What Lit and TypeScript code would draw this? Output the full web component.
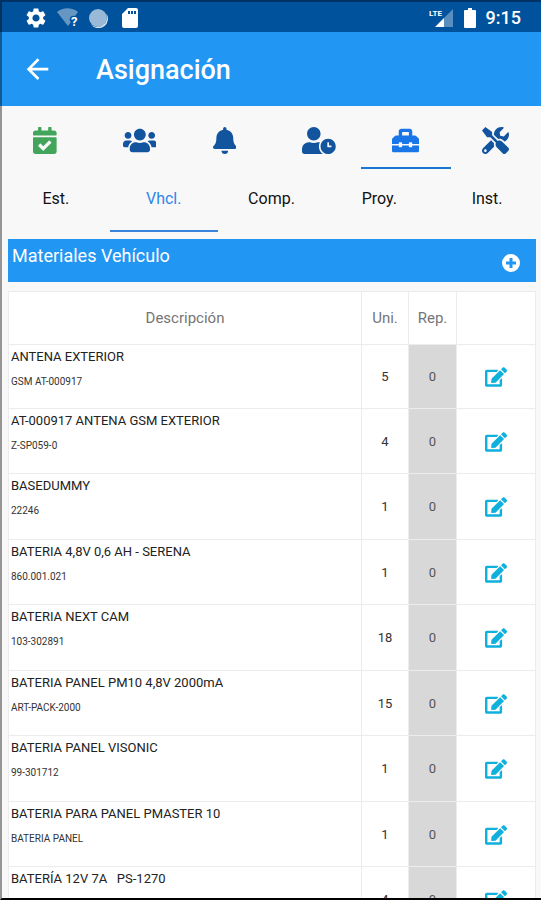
import { LitElement, html, css, svg } from "lit";
import { customElement, state } from "lit/decorators.js";

interface Material {
  name: string;
  code?: string;
  units: number;
  replaced: number;
}

interface Section {
  label: string;
  width: number;
  tone?: string;
  path: string;
}

const SECTIONS: Section[] = [
  {
    label: "Estado",
    width: 448,
    tone: "green",
    path: "M436 160H12c-6.627 0-12-5.373-12-12v-36c0-26.51 21.49-48 48-48h48V12c0-6.627 5.373-12 12-12h40c6.627 0 12 5.373 12 12v52h128V12c0-6.627 5.373-12 12-12h40c6.627 0 12 5.373 12 12v52h48c26.51 0 48 21.49 48 48v36c0 6.627-5.373 12-12 12zM12 192h424c6.627 0 12 5.373 12 12v260c0 26.51-21.49 48-48 48H48c-26.51 0-48-21.49-48-48V204c0-6.627 5.373-12 12-12zm333.296 95.947l-28.169-28.398c-4.667-4.705-12.265-4.736-16.97-.068L194.12 364.665l-45.98-46.352c-4.667-4.705-12.266-4.736-16.971-.068l-28.397 28.17c-4.705 4.667-4.736 12.265-.068 16.97l82.601 83.269c4.667 4.705 12.265 4.736 16.97.068l142.953-141.805c4.705-4.667 4.736-12.265.068-16.97z",
  },
  {
    label: "Equipo",
    width: 640,
    path: "M96 224c35.3 0 64-28.7 64-64s-28.7-64-64-64-64 28.7-64 64 28.7 64 64 64zm448 0c35.3 0 64-28.7 64-64s-28.7-64-64-64-64 28.7-64 64 28.7 64 64 64zm32 32h-64c-17.6 0-33.5 7.1-45.1 18.6 40.3 22.1 68.9 62 75.1 109.4h66c17.7 0 32-14.3 32-32v-32c0-35.3-28.7-64-64-64zm-256 0c61.9 0 112-50.1 112-112S381.9 32 320 32 208 82.1 208 144s50.1 112 112 112zm76.8 32h-8.3c-20.8 10-43.9 16-68.5 16s-47.6-6-68.5-16h-8.3C179.6 288 128 339.6 128 403.2V432c0 26.5 21.5 48 48 48h288c26.5 0 48-21.5 48-48v-28.8c0-63.6-51.6-115.2-115.2-115.2zm-223.7-13.4C161.5 263.1 145.6 256 128 256H64c-35.3 0-64 28.7-64 64v32c0 17.7 14.3 32 32 32h65.9c6.3-47.4 34.9-87.3 75.2-109.4z",
  },
  {
    label: "Avisos",
    width: 448,
    path: "M224 512c35.32 0 63.97-28.65 63.97-64H160.03c0 35.35 28.65 64 63.97 64zm215.39-149.71c-19.32-20.76-55.47-51.99-55.47-154.29 0-77.7-54.48-139.9-127.94-155.16V32c0-17.67-14.32-32-31.98-32s-31.98 14.33-31.98 32v20.84C118.56 68.1 64.08 130.3 64.08 208c0 102.3-36.15 133.53-55.47 154.29-6 6.45-8.66 14.16-8.61 21.71.11 16.4 12.98 32 32.1 32h383.8c19.12 0 32-15.6 32.1-32 .05-7.55-2.61-15.27-8.61-21.71z",
  },
  {
    label: "Horario",
    width: 640,
    path: "M496 224c-79.6 0-144 64.4-144 144s64.4 144 144 144 144-64.4 144-144-64.4-144-144-144zm64 150.3c0 5.3-4.4 9.7-9.7 9.7h-60.6c-5.3 0-9.7-4.4-9.7-9.7v-76.6c0-5.3 4.4-9.7 9.7-9.7h12.6c5.3 0 9.7 4.4 9.7 9.7V352h38.3c5.3 0 9.7 4.4 9.7 9.7v12.6zM320 368c0-27.8 6.7-54.1 18.2-77.5-8-1.5-16.2-2.5-24.6-2.5h-16.7c-22.2 10.2-46.9 16-72.9 16s-50.6-5.8-72.9-16h-16.7C60.2 288 0 348.2 0 422.4V464c0 26.5 21.5 48 48 48h347.1c-45.3-31.9-75.1-84.5-75.1-144zm-96-112c70.7 0 128-57.3 128-128S294.7 0 224 0 96 57.3 96 128s57.3 128 128 128z",
  },
  {
    label: "Materiales",
    width: 512,
    path: "M502.63 214.63l-45.25-45.25c-6-6-14.14-9.37-22.63-9.37H384V80c0-26.51-21.49-48-48-48H176c-26.51 0-48 21.49-48 48v80H77.25c-8.49 0-16.62 3.37-22.63 9.37L9.37 214.63c-6 6-9.37 14.14-9.37 22.63V320h128v-16c0-8.84 7.16-16 16-16h32c8.84 0 16 7.16 16 16v16h128v-16c0-8.84 7.16-16 16-16h32c8.84 0 16 7.16 16 16v16h128v-82.75c0-8.48-3.37-16.62-9.37-22.62zM320 160H192V96h128v64zm64 208c0 8.84-7.16 16-16 16h-32c-8.84 0-16-7.16-16-16v-16H192v16c0 8.84-7.16 16-16 16h-32c-8.84 0-16-7.16-16-16v-16H0v96c0 17.67 14.33 32 32 32h448c17.67 0 32-14.33 32-32v-96H384v16z",
  },
  {
    label: "Herramientas",
    width: 512,
    path: "M501.1 395.7L384 278.6c-23.1-23.1-57.6-27.6-85.4-13.9L192 158.1V96L64 0 0 64l96 128h62.1l106.6 106.6c-13.6 27.8-9.2 62.3 13.9 85.4l117.1 117.1c14.6 14.6 38.2 14.6 52.7 0l52.7-52.7c14.5-14.6 14.5-38.2 0-52.7zM331.7 225c28.3 0 54.9 11 74.9 31l19.4 19.4c15.8-6.9 30.8-16.5 43.8-29.5 37.1-37.1 49.7-89.3 37.9-136.7-2.2-9-13.5-12.1-20.1-5.5l-74.4 74.4-67.9-11.3L334 98.9l74.4-74.4c6.6-6.6 3.4-17.9-5.7-20.2-47.4-11.7-99.6.9-136.6 37.9-28.5 28.5-41.9 66.1-41.2 103.6l82.1 82.1c8.1-1.9 16.5-2.9 24.7-2.9zm-103.9 82l-56.7-56.7L18.7 402.8c-25 25-25 65.5 0 90.5s65.5 25 90.5 0l123.6-123.6c-7.6-19.9-9.9-41.6-5-62.7zM64 472c-13.2 0-24-10.8-24-24 0-13.3 10.7-24 24-24s24 10.7 24 24c0 13.2-10.7 24-24 24z",
  },
];

const TABS = ["Est.", "Vhcl.", "Comp.", "Proy.", "Inst."];

const MATERIALS: Material[] = [
  { name: "ANTENA EXTERIOR", code: "GSM AT-000917", units: 5, replaced: 0 },
  { name: "AT-000917 ANTENA GSM EXTERIOR", code: "Z-SP059-0", units: 4, replaced: 0 },
  { name: "BASEDUMMY", code: "22246", units: 1, replaced: 0 },
  { name: "BATERIA 4,8V 0,6 AH - SERENA", code: "860.001.021", units: 1, replaced: 0 },
  { name: "BATERIA NEXT CAM", code: "103-302891", units: 18, replaced: 0 },
  { name: "BATERIA PANEL PM10 4,8V 2000mA", code: "ART-PACK-2000", units: 15, replaced: 0 },
  { name: "BATERIA PANEL VISONIC", code: "99-301712", units: 1, replaced: 0 },
  { name: "BATERIA PARA PANEL PMASTER 10", code: "BATERIA PANEL", units: 1, replaced: 0 },
  { name: "BATERÍA 12V 7A \u00a0 PS-1270", units: 4, replaced: 0 },
];

const EDIT_PATH = svg`<path d="M402.6 83.2l90.2 90.2c3.8 3.8 3.8 10 0 13.8L274.4 405.6l-92.8 10.3c-12.4 1.4-22.9-9.1-21.5-21.5l10.3-92.8L388.8 83.2c3.8-3.8 10-3.8 13.8 0zm162-22.9l-48.8-48.8c-15.2-15.2-39.9-15.2-55.2 0l-35.4 35.4c-3.8 3.8-3.8 10 0 13.8l90.2 90.2c3.8 3.8 10 3.8 13.8 0l35.4-35.4c15.2-15.3 15.2-40 0-55.2zM384 346.2V448H64V128h229.8c3.2 0 6.2-1.3 8.5-3.5l40-40c7.6-7.6 2.2-20.5-8.5-20.5H48C21.5 64 0 85.500 0 112v352c0 26.5 21.5 48 48 48h352c26.5 0 48-21.5 48-48V306.2c0-10.7-12.9-16-20.5-8.5l-40 40c-2.2 2.3-3.5 5.3-3.5 8.5z"/>`;

@customElement("status-bar")
export class StatusBar extends LitElement {
  static styles = css`
    :host {
      display: flex;
      align-items: center;
      justify-content: space-between;
      height: 32px;
      padding: 3px 20px 0 25px;
      box-sizing: border-box;
      background: #00529c;
      color: #fff;
      font: 500 18px/24px Roboto, sans-serif;
    }
    .group {
      display: flex;
      align-items: center;
      gap: 10px;
    }
    svg {
      display: block;
      fill: #fff;
    }
    .lte {
      font: 700 8px Roboto, sans-serif;
    }
    .question {
      font: 700 13px Roboto, sans-serif;
    }
  `;

  render() {
    return html`
      <div class="group">
        <svg width="22" height="22" viewBox="1 1 22 22" aria-hidden="true">
          <path d="M19.14 12.94c.04-.3.06-.61.06-.94 0-.32-.02-.64-.07-.94l2.03-1.58c.18-.14.23-.41.12-.61l-1.92-3.32c-.12-.22-.37-.29-.59-.22l-2.39.96c-.5-.38-1.03-.7-1.62-.94l-.36-2.54c-.04-.24-.24-.41-.48-.41h-3.84c-.24 0-.43.17-.47.41l-.36 2.54c-.59.24-1.13.57-1.62.94l-2.39-.96c-.22-.08-.47 0-.59.22L2.74 8.87c-.12.21-.08.47.12.61l2.03 1.58c-.05.3-.09.63-.09.94s.02.64.07.94l-2.03 1.58c-.18.14-.23.41-.12.61l1.92 3.32c.12.22.37.29.59.22l2.39-.96c.5.38 1.03.7 1.62.94l.36 2.54c.05.24.24.41.48.41h3.84c.24 0 .44-.17.47-.41l.36-2.54c.59-.24 1.13-.56 1.62-.94l2.39.96c.22.08.47 0 .59-.22l1.92-3.32c.12-.22.07-.47-.12-.61l-2.01-1.58zM12 15.6c-1.98 0-3.6-1.62-3.6-3.6s1.62-3.6 3.6-3.6 3.6 1.62 3.6 3.6-1.62 3.6-3.6 3.6z"/>
        </svg>
        <svg width="21" height="20" viewBox="0 0 21 20" aria-hidden="true">
          <path opacity=".4" d="M0 4C6-1 15-1 21 4l-3 4c-4-1-6 2-5 5l1 1-3 4z"/>
          <text class="question" x="14" y="18">?</text>
        </svg>
        <svg width="20" height="20" viewBox="0 0 20 20" aria-hidden="true">
          <circle cx="10" cy="10" r="9" opacity=".6"/>
          <path opacity=".85" d="M18 5a9.600 9.600 0 0 1-15 11.500A9.300 9.300 0 0 0 18 5z"/>
        </svg>
        <svg width="24" height="20" viewBox="-4 0 24 20" aria-hidden="true">
          <path fill-rule="evenodd" d="M6 0h8a2 2 0 0 1 2 2v16a2 2 0 0 1-2 2H2a2 2 0 0 1-2-2V6zM6 3v3h2V3zm3 0v3h2V3zm3 0v3h2V3z"/>
        </svg>
      </div>
      <div class="group">
        <svg width="25" height="20" viewBox="0 0 25 20" aria-hidden="true">
          <path d="M6 19L15 10V19z"/>
          <path opacity=".35" d="M15 10L24 1V19H15z"/>
          <text class="lte" x="0" y="8">LTE</text>
        </svg>
        <svg width="12" height="20" viewBox="0 0 12 20" aria-hidden="true">
          <path d="M4 0h4v2h3a1 1 0 0 1 1 1v16a1 1 0 0 1-1 1H1a1 1 0 0 1-1-1V3a1 1 0 0 1 1-1h3z"/>
        </svg>
        <span>9:15</span>
      </div>
    `;
  }
}

@customElement("materials-table")
export class MaterialsTable extends LitElement {
  static styles = css`
    :host {
      display: block;
    }
    table {
      width: 100%;
      table-layout: fixed;
      border-collapse: collapse;
      background: #fff;
    }
    th,
    td {
      box-sizing: border-box;
      padding: 0;
      border: 1px solid #ececec;
      text-align: center;
    }
    th {
      height: 53px;
      color: #757575;
      font: 400 15px/20px Roboto, sans-serif;
    }
    td {
      height: 66px;
      padding-top: 1px;
      font: 400 13px/20px Roboto, sans-serif;
      color: #333;
    }
    tbody tr:nth-child(even) td {
      height: 65px;
    }
    tbody tr:first-child td {
      height: 64px;
    }
    .units {
      width: 47px;
    }
    .replaced {
      width: 48px;
    }
    .actions {
      width: 79px;
    }
    td.item {
      padding: 2px 2px 0;
      text-align: left;
      vertical-align: top;
    }
    .name,
    .code {
      display: block;
      overflow: hidden;
      white-space: nowrap;
    }
    .name {
      font-size: 13px;
      line-height: 20px;
      color: #222;
    }
    .code {
      margin-top: 6px;
      font-size: 10px;
      line-height: 18px;
      color: #333;
    }
    .zero {
      background: #d8d8d8;
      color: #555;
    }
    .edit {
      display: inline-flex;
      padding: 6px;
      border: 0;
      background: none;
      color: #10b0dc;
      vertical-align: middle;
      cursor: pointer;
    }
    .edit svg {
      width: 22px;
      height: 20px;
      fill: currentColor;
    }
  `;

  render() {
    return html`
      <table>
        <thead>
          <tr>
            <th scope="col">Descripción</th>
            <th scope="col" class="units">Uni.</th>
            <th scope="col" class="replaced">Rep.</th>
            <th class="actions"></th>
          </tr>
        </thead>
        <tbody>
          ${MATERIALS.map(
            (m) => html`
              <tr>
                <td class="item">
                  <span class="name">${m.name}</span>
                  <span class="code">${m.code}</span>
                </td>
                <td>${m.units}</td>
                <td class="zero">${m.replaced}</td>
                <td>
                  <button class="edit" aria-label=${`Editar ${m.name}`}>
                    <svg viewBox="0 0 576 512" aria-hidden="true">${EDIT_PATH}</svg>
                  </button>
                </td>
              </tr>
            `
          )}
        </tbody>
      </table>
    `;
  }
}

@customElement("app-root")
export class AppRoot extends LitElement {
  @state() private section = 4;
  @state() private tab = 1;

  static styles = css`
    :host {
      display: flex;
      flex-direction: column;
      position: relative;
      height: 100vh;
      overflow: hidden;
      background: #f8f8f9;
      font-family: Roboto, sans-serif;
    }
    /* Device frame edges drawn over the page. */
    :host::after {
      content: "";
      position: absolute;
      inset: 0;
      border-top: 2px solid rgba(0, 20, 50, 0.5);
      border-left: 2px solid rgba(0, 0, 0, 0.4);
      border-bottom: 2px solid #000;
      pointer-events: none;
    }
    button {
      margin: 0;
      padding: 0;
      border: 0;
      background: none;
      color: inherit;
      font-family: inherit;
      cursor: pointer;
    }
    svg {
      display: block;
      fill: currentColor;
    }
    .toolbar {
      display: flex;
      flex: none;
      align-items: center;
      gap: 45px;
      height: 74px;
      padding: 2px 24px 0;
      box-sizing: border-box;
      background: #2196f3;
      color: #fff;
    }
    .title {
      margin: 0;
      font-size: 27px;
      font-weight: 500;
      line-height: 32px;
    }
    .sections,
    .tabs {
      display: grid;
      flex: none;
      height: 63px;
      padding-left: 2px;
    }
    .sections {
      grid-template-columns: repeat(6, 1fr);
    }
    .tabs {
      grid-template-columns: repeat(5, 1fr);
    }
    .section,
    .tab {
      display: flex;
      align-items: center;
      justify-content: center;
      border-bottom: 2px solid transparent;
    }
    .section {
      padding-top: 7px;
      color: #12559e;
    }
    /* Fixed icon box: wider glyphs run past its right edge. */
    .icon {
      width: 28px;
    }
    .icon svg {
      height: 27px;
    }
    .section.green {
      color: #43a55b;
    }
    .section.selected {
      color: #1976e8;
      border-color: #1976d2;
    }
    .tab {
      padding-bottom: 2px;
      color: #111;
      font-size: 16px;
      line-height: 20px;
    }
    .tab.selected {
      color: #2f86ea;
      border-color: #3b84dc;
    }
    .content {
      flex: 1;
      min-height: 0;
      padding: 7px 5px 0 8px;
      overflow: hidden;
    }
    .banner {
      display: flex;
      justify-content: space-between;
      height: 43px;
      margin-bottom: 9px;
      padding: 5px 15px 5px 4px;
      box-sizing: border-box;
      background: #2196f3;
      color: #fff;
    }
    .banner h2 {
      margin: 0;
      font-size: 18px;
      font-weight: 400;
      line-height: 24px;
    }
    .add {
      align-self: center;
      padding-top: 4px;
    }
  `;

  render() {
    return html`
      <status-bar></status-bar>
      <header class="toolbar">
        <button aria-label="Volver">
          <svg width="27" height="27" viewBox="2 3 20 20" aria-hidden="true">
            <path d="M20 11H7.830l5.590-5.590L12 4l-8 8 8 8 1.410-1.410L7.830 13H20z"/>
          </svg>
        </button>
        <h1 class="title">Asignación</h1>
      </header>
      <nav class="sections">
        ${SECTIONS.map(
          (s, i) => html`
            <button
              class="section ${s.tone ?? ""} ${i === this.section ? "selected" : ""}"
              aria-label=${s.label}
              @click=${() => (this.section = i)}
            >
              <span class="icon">
                <svg viewBox="0 0 ${s.width} 512" aria-hidden="true">
                  <path d=${s.path}></path>
                </svg>
              </span>
            </button>
          `
        )}
      </nav>
      <nav class="tabs">
        ${TABS.map(
          (label, i) => html`
            <button
              class="tab ${i === this.tab ? "selected" : ""}"
              @click=${() => (this.tab = i)}
            >
              ${label}
            </button>
          `
        )}
      </nav>
      <main class="content">
        <div class="banner">
          <h2>Materiales Vehículo</h2>
          <button class="add" aria-label="Añadir material">
            <svg width="20" height="20" viewBox="0 0 20 20" aria-hidden="true">
              <path fill-rule="evenodd" d="M10 1a9 9 0 1 0 0 18a9 9 0 0 0 0-18zM8.500 5h3v3.500H15v3h-3.500V15h-3v-3.500H5v-3h3.500z"/>
            </svg>
          </button>
        </div>
        <materials-table></materials-table>
      </main>
    `;
  }
}
